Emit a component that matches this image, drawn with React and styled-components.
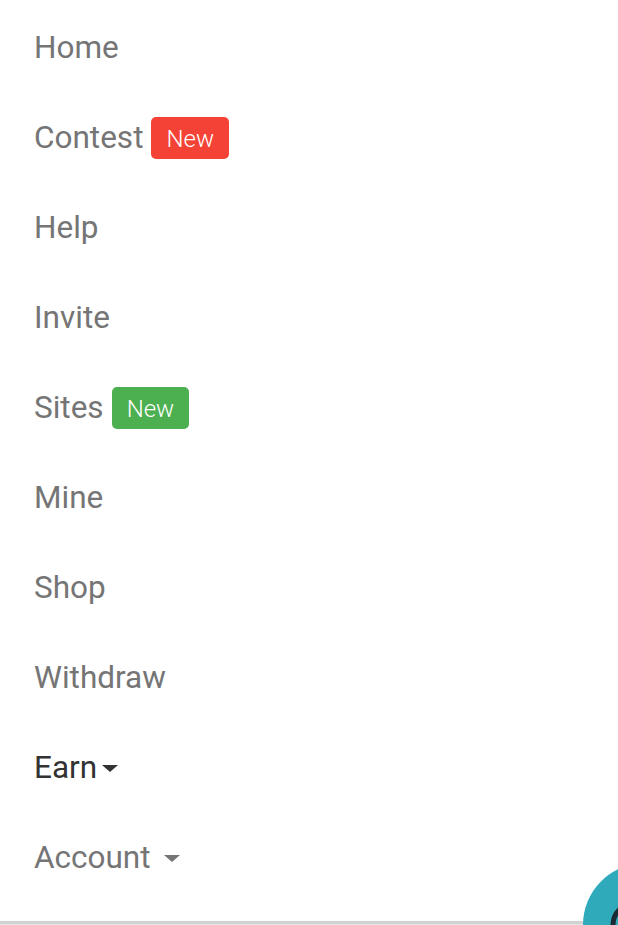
import React from "react";
import styled, { createGlobalStyle } from "styled-components";

const Global = createGlobalStyle`
  html, body { margin: 0; padding: 0; background: #fff; }
  body { font-family: Roboto, "Noto Sans", sans-serif; overflow: hidden; }
`;

const Page = styled.div`
  position: relative;
  width: 618px;
  height: 925px;
  overflow: hidden;
`;

const Menu = styled.nav`
  display: flex;
  flex-direction: column;
  padding: 2px 0 19px 0;
  border-bottom: 3px solid #d2d2d2;
  box-shadow: 0 1px 2px rgba(0, 0, 0, 0.15);
`;

const Item = styled.a`
  display: flex;
  align-items: center;
  height: 90px;
  padding-left: 34px;
  font-size: 31.5px;
  font-weight: 400;
  color: ${(p) => (p.$active ? "#333333" : "#757575")};
  text-decoration: none;
`;

const Badge = styled.span`
  display: inline-flex;
  align-items: center;
  justify-content: center;
  height: 42px;
  padding: 2px 15px 0;
  box-sizing: border-box;
  margin-left: 8px;
  margin-top: 2px;
  border-radius: 5px;
  font-size: 24px;
  font-weight: 300;
  color: #fff;
  background: ${(p) => p.$color};
`;

const Caret = styled.span`
  display: inline-block;
  width: 0;
  height: 0;
  margin-left: ${(p) => p.$gap}px;
  border-left: 8px solid transparent;
  border-right: 8px solid transparent;
  border-top: 7px solid ${(p) => p.$color};
  margin-top: 2px;
`;

const Fab = styled.div`
  position: absolute;
  left: 583px;
  top: 863px;
  width: 124px;
  height: 124px;
  border-radius: 50%;
  background: #2eaabb;
  overflow: hidden;
`;

export default function App() {
  return (
    <Page>
      <Global />
      <Menu>
        <Item>Home</Item>
        <Item>
          Contest<Badge $color="#f44336">New</Badge>
        </Item>
        <Item>Help</Item>
        <Item>Invite</Item>
        <Item>
          Sites<Badge $color="#4caf50">New</Badge>
        </Item>
        <Item>Mine</Item>
        <Item>Shop</Item>
        <Item>Withdraw</Item>
        <Item $active>
          Earn<Caret $gap={5} $color="#333333" />
        </Item>
        <Item>
          Account<Caret $gap={13} $color="#757575" />
        </Item>
      </Menu>
      <Fab>
        <svg width="124" height="124" viewBox="0 0 124 124">
          <circle cx="52" cy="62" r="22" fill="none" stroke="#1b2b33" strokeWidth="5" />
        </svg>
      </Fab>
    </Page>
  );
}
